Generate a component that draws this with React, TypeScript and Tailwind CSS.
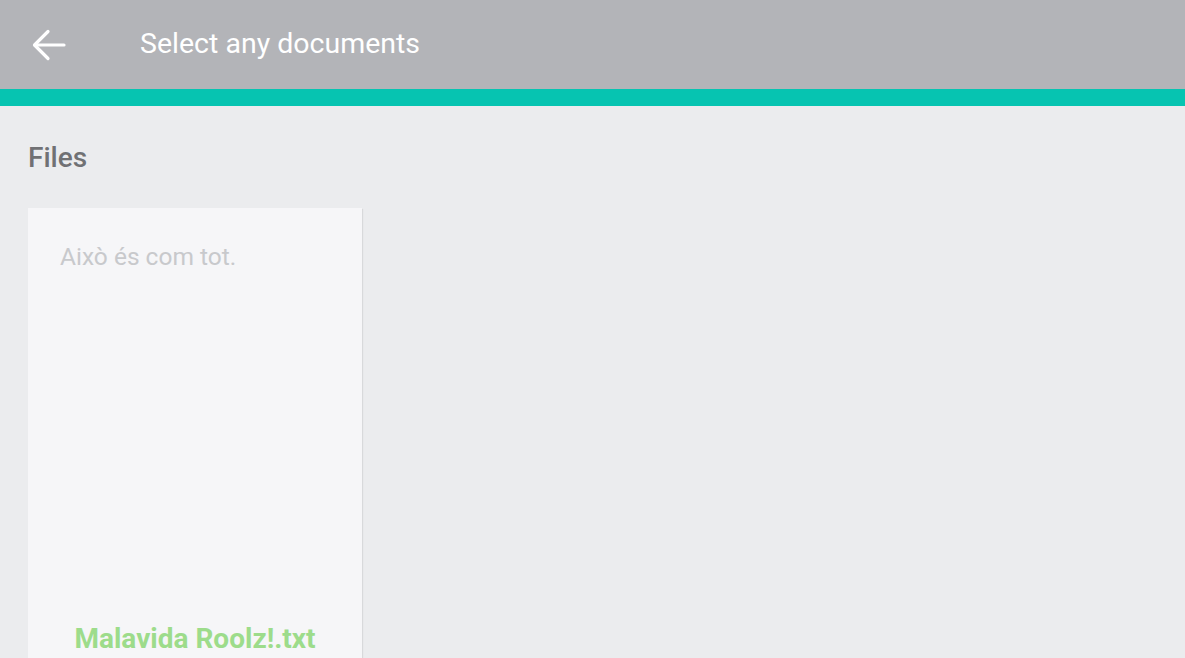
import React from 'react';

const files = [
  { name: 'Malavida Roolz!.txt', preview: 'Això és com tot.' },
];

function BackArrow() {
  return (
    <svg width="34" height="32" viewBox="0 0 34 32" fill="none" stroke="white" strokeWidth="3.2" strokeLinecap="round" strokeLinejoin="round">
      <path d="M32 16H3" />
      <path d="M16 2.5L2.5 16L16 29.5" />
    </svg>
  );
}

export default function App() {
  return (
    <div className="w-[1185px] h-[658px] overflow-hidden bg-[#ebecee] flex flex-col" style={{ fontFamily: 'Roboto, "Liberation Sans", sans-serif' }}>
      {/* toolbar */}
      <div className="h-[89px] bg-[#b3b4b8] flex items-center shrink-0">
        <button className="ml-[32px] w-[34px] h-[32px] flex items-center justify-center">
          <BackArrow />
        </button>
        <h1 className="ml-[74px] text-[28.5px] text-white font-normal leading-none pb-[1px]">Select any documents</h1>
      </div>
      <div className="h-[17px] bg-[#06c4b1] shrink-0" />

      {/* content */}
      <div className="flex-1 px-[28px] pt-[38px] flex flex-col min-h-0">
        <h2 className="text-[28px] font-medium text-[#707174] leading-none">Files</h2>
        <div className="mt-[36px] flex gap-4 flex-1 min-h-0">
          {files.map((f) => (
            <div key={f.name} className="w-[334px] bg-[#f6f6f8] shadow-[1px_1px_1px_rgba(0,0,0,0.08)] flex flex-col px-[32px] pt-[37px] pb-[5px]">
              <p className="text-[24.5px] text-[#c8c9cc] leading-none flex-1">{f.preview}</p>
              <span className="text-[28px] font-bold text-[#9ddc8b] text-center leading-none">{f.name}</span>
            </div>
          ))}
        </div>
      </div>
    </div>
  );
}
